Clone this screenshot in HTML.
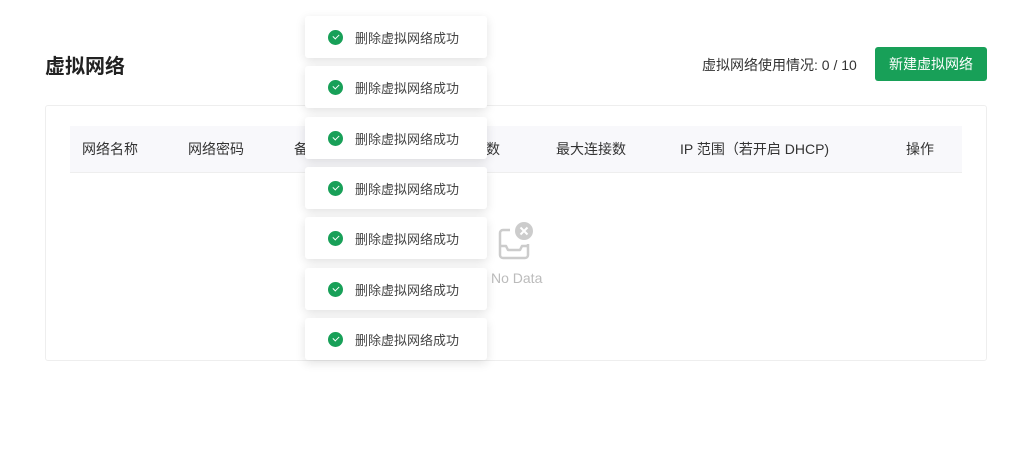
<!DOCTYPE html><html><head><meta charset="utf-8"><style>
body{margin:0;width:1017px;height:466px;background:#fff;font-family:"Liberation Sans","Noto Sans CJK SC",sans-serif;position:relative;overflow:hidden;color:#333}
.t{position:absolute;left:45px;top:50px;font-size:20px;font-weight:bold;color:#222}
.u{position:absolute;left:702px;top:55px;font-size:14px;color:#333}
.b{position:absolute;left:875px;top:47px;width:112px;height:34px;background:#18a058;color:#fff;font-size:14px;line-height:34px;text-align:center;border-radius:3px}
.box{position:absolute;left:45px;top:105px;width:940px;height:254px;border:1px solid #eee;border-radius:3px}
.hd{position:absolute;left:70px;top:126px;width:892px;height:46px;background:#f8f8fb;border-bottom:1px solid #eee;font-size:14px;color:#333}
.hd span{position:absolute;top:13px}
.nd{position:absolute;left:491px;top:270px;font-size:14px;color:#bbb}
.toast{position:absolute;left:305px;width:182px;height:42px;background:#fff;border-radius:3px;box-shadow:0 3px 10px rgba(0,0,0,.12);font-size:13px;color:#444}
.toast i{position:absolute;left:23px;top:14px;width:15px;height:15px;border-radius:50%;background:#18a058}
.toast i:after{content:"";position:absolute;left:4.5px;top:3.5px;width:5px;height:3px;border-left:1.5px solid #fff;border-bottom:1.5px solid #fff;transform:rotate(-45deg)}
.toast span{position:absolute;left:50px;top:12px}
</style></head><body>
<div class="t">虚拟网络</div>
<div class="u">虚拟网络使用情况: 0 / 10</div>
<div class="b">新建虚拟网络</div>
<div class="box"></div>
<div class="hd"><span style="left:12px">网络名称</span><span style="left:118px">网络密码</span><span style="left:224px">备注</span><span style="left:416px">数</span><span style="left:486px">最大连接数</span><span style="left:610px">IP 范围（若开启 DHCP)</span><span style="left:836px">操作</span></div>
<svg style="position:absolute;left:496px;top:220px" width="40" height="40" viewBox="0 0 40 40"><path d="M14 10h-7a3 3 0 0 0-3 3v22a3 3 0 0 0 3 3h22a3 3 0 0 0 3-3v-11M4 26h6l2 4h12l2-4h6" fill="none" stroke="#ccc" stroke-width="2.5" stroke-linejoin="round"/><circle cx="28" cy="11" r="9" fill="#ccc"/><path d="M24.5 7.5l7 7M31.5 7.5l-7 7" stroke="#fff" stroke-width="2"/></svg>
<div class="nd">No Data</div>
<div class="toast" style="top:16px"><i></i><span>删除虚拟网络成功</span></div>
<div class="toast" style="top:66px"><i></i><span>删除虚拟网络成功</span></div>
<div class="toast" style="top:117px"><i></i><span>删除虚拟网络成功</span></div>
<div class="toast" style="top:167px"><i></i><span>删除虚拟网络成功</span></div>
<div class="toast" style="top:217px"><i></i><span>删除虚拟网络成功</span></div>
<div class="toast" style="top:268px"><i></i><span>删除虚拟网络成功</span></div>
<div class="toast" style="top:318px"><i></i><span>删除虚拟网络成功</span></div>
</body></html>
